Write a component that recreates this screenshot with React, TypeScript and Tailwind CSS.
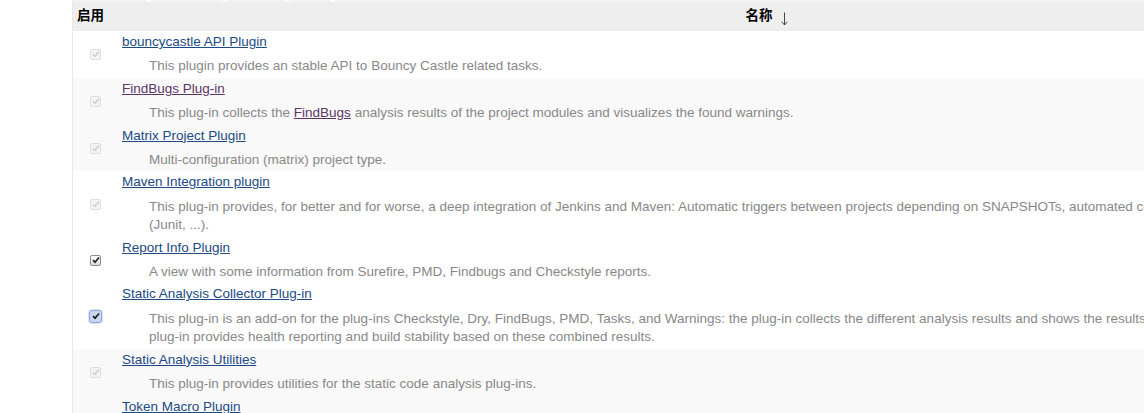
import React from "react";

type Cb = "disabled" | "checked" | "focus";

function Check({ kind }: { kind: Cb }) {
  if (kind === "disabled") {
    return (
      <span className="flex h-[11px] w-[11px] items-center justify-center rounded-[2px] border border-[#dedede] bg-[#f4f4f4]">
        <svg width="8" height="8" viewBox="0 0 8 8">
          <path d="M1 4.2 L3 6.2 L7 1.5" fill="none" stroke="#cfcfcf" strokeWidth="1.6" />
        </svg>
      </span>
    );
  }
  if (kind === "checked") {
    return (
      <span className="flex h-[11px] w-[11px] items-center justify-center rounded-[2px] border border-[#8c8c8c] bg-gradient-to-b from-[#ffffff] to-[#dcdcdc]">
        <svg width="8" height="8" viewBox="0 0 8 8">
          <path d="M1 4.2 L3 6.2 L7 1.5" fill="none" stroke="#222" strokeWidth="1.7" />
        </svg>
      </span>
    );
  }
  return (
    <span className="flex h-[13px] w-[13px] items-center justify-center rounded-[3px] border border-[#8ea6d8] bg-[#c9d7f1] shadow-[0_0_0_1px_#dbe5f8]">
      <svg width="8" height="8" viewBox="0 0 8 8">
        <path d="M1 4.2 L3 6.2 L7 1.5" fill="none" stroke="#1a1a1a" strokeWidth="1.7" />
      </svg>
    </span>
  );
}

type Row = {
  name: string;
  desc: React.ReactNode;
  gray: boolean;
  cb: Cb;
  visited?: boolean;
};

const link = "text-[#204a87] underline";
const visitedLink = "text-[#5c3566] underline";

const rows: Row[] = [
  {
    name: "bouncycastle API Plugin",
    desc: "This plugin provides an stable API to Bouncy Castle related tasks.",
    gray: false,
    cb: "disabled",
  },
  {
    name: "FindBugs Plug-in",
    visited: true,
    desc: (
      <>
        This plug-in collects the <a className={visitedLink}>FindBugs</a> analysis results of the
        project modules and visualizes the found warnings.
      </>
    ),
    gray: true,
    cb: "disabled",
  },
  {
    name: "Matrix Project Plugin",
    desc: "Multi-configuration (matrix) project type.",
    gray: true,
    cb: "disabled",
  },
  {
    name: "Maven Integration plugin",
    desc: (
      <>
        This plug-in provides, for better and for worse, a deep integration of Jenkins and Maven:
        Automatic triggers between projects depending on SNAPSHOTs, automated configuration of
        various Jenkins publishers
        <br />
        (Junit, ...).
      </>
    ),
    gray: false,
    cb: "disabled",
  },
  {
    name: "Report Info Plugin",
    desc: "A view with some information from Surefire, PMD, Findbugs and Checkstyle reports.",
    gray: false,
    cb: "checked",
  },
  {
    name: "Static Analysis Collector Plug-in",
    desc: (
      <>
        This plug-in is an add-on for the plug-ins Checkstyle, Dry, FindBugs, PMD, Tasks, and
        Warnings: the plug-in collects the different analysis results and shows the results in a
        combined trend graph. Additionally, the
        <br />
        plug-in provides health reporting and build stability based on these combined results.
      </>
    ),
    gray: false,
    cb: "focus",
  },
  {
    name: "Static Analysis Utilities",
    desc: "This plug-in provides utilities for the static code analysis plug-ins.",
    gray: true,
    cb: "disabled",
  },
  {
    name: "Token Macro Plugin",
    desc: "This plug-in adds reusable macro expansion capability for other plug-ins to use.",
    gray: true,
    cb: "disabled",
  },
];

export default function App() {
  return (
    <div
      className="h-[413px] w-[1144px] overflow-hidden bg-white text-[13.5px]"
      style={{ fontFamily: '"Liberation Sans", "Noto Sans CJK SC", Arial, sans-serif' }}
    >
      <div className="flex h-[2px] pl-[72px]">
        <div className="w-[75px] bg-[#f2f2f2]" />
        <div className="w-[4px] bg-white" />
        <div className="w-[72px] bg-[#f2f2f2]" />
        <div className="w-[4px] bg-white" />
        <div className="w-[58px] bg-[#f2f2f2]" />
        <div className="w-[4px] bg-white" />
        <div className="w-[42px] bg-[#f2f2f2]" />
        <div className="w-[4px] bg-white" />
        <div className="flex-1 bg-[#f2f2f2]" />
      </div>
      <div className="ml-[72px] w-[1800px] border-l border-[#e8e8e8]">
        <div className="flex h-[29px] items-center bg-[#eeeeee] font-bold text-black">
          <div className="w-[45px] pl-[4px]">启用</div>
          <div className="flex w-[1297px] items-center justify-center">
            <span>名称</span>
            <svg className="ml-[8px] mt-[4px]" width="7" height="14" viewBox="0 0 7 14">
              <path d="M3.5 0.5 V13" stroke="#444" strokeWidth="1" fill="none" />
              <path d="M0.8 9.8 L3.5 13 L6.2 9.8" stroke="#444" strokeWidth="1" fill="none" />
            </svg>
          </div>
        </div>
        {rows.map((r) => (
          <div key={r.name} className={`flex ${r.gray ? "bg-[#f9f9f9]" : "bg-white"}`}>
            <div className="flex w-[45px] items-center justify-center">
              <Check kind={r.cb} />
            </div>
            <div className="pb-[2px] pl-[4px] pt-[2px] leading-[18.4px]">
              <div className="whitespace-nowrap">
                <a className={r.visited ? visitedLink : link}>{r.name}</a>
              </div>
              <div className="mt-[6px] whitespace-nowrap pl-[27px] text-[#888888]">{r.desc}</div>
            </div>
          </div>
        ))}
      </div>
    </div>
  );
}
